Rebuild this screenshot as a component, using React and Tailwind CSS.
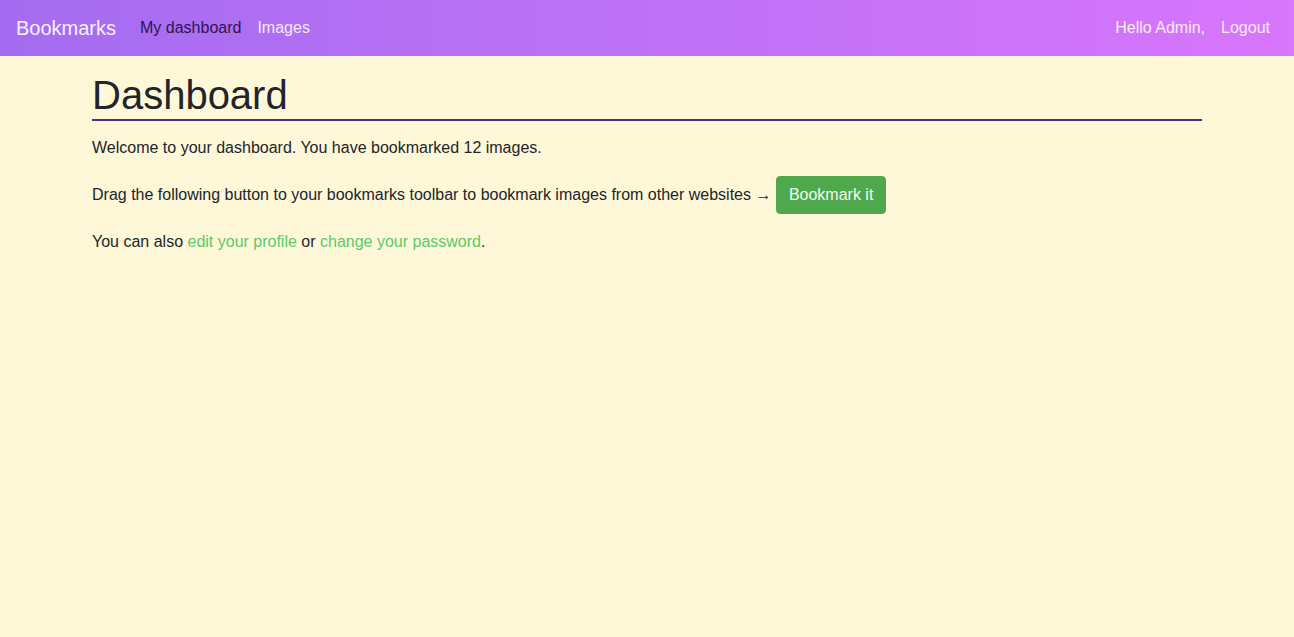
export default function App() {
  return (
    <div
      className="min-h-[637px] bg-[#fef8d9] text-[#212529] text-base leading-6"
      style={{ fontFamily: '"Liberation Sans", Arial, sans-serif' }}
    >
      <nav className="h-14 flex items-center px-4 bg-gradient-to-r from-[#a46cf0] to-[#d876fc]">
        <a href="#" className="text-xl text-white/90 mr-4 leading-[30px]">Bookmarks</a>
        <a href="#" className="px-2 text-[#2b1550]">My dashboard</a>
        <a href="#" className="px-2 text-white/85">Images</a>
        <div className="ml-auto flex items-center">
          <span className="text-white/85 mr-2">Hello Admin,</span>
          <a href="#" className="px-2 text-white/85">Logout</a>
        </div>
      </nav>

      <main className="w-[1110px] mx-auto">
        <h1 className="mt-[15px] text-[40px] leading-[48px] border-b-2 border-[#4b3182] mb-[15px]">
          Dashboard
        </h1>
        <p className="mb-4">Welcome to your dashboard. You have bookmarked 12 images.</p>
        <p className="mb-4">
          Drag the following button to your bookmarks toolbar to bookmark images from other websites →{' '}
          <a href="#" className="inline-block px-3 py-1.5 rounded border border-[#4fa94c] bg-[#4fa94c] text-[#eefcf0]">
            Bookmark it
          </a>
        </p>
        <p>
          You can also <a href="#" className="text-[#5cc96c]">edit your profile</a> or{' '}
          <a href="#" className="text-[#5cc96c]">change your password</a>.
        </p>
      </main>
    </div>
  );
}
